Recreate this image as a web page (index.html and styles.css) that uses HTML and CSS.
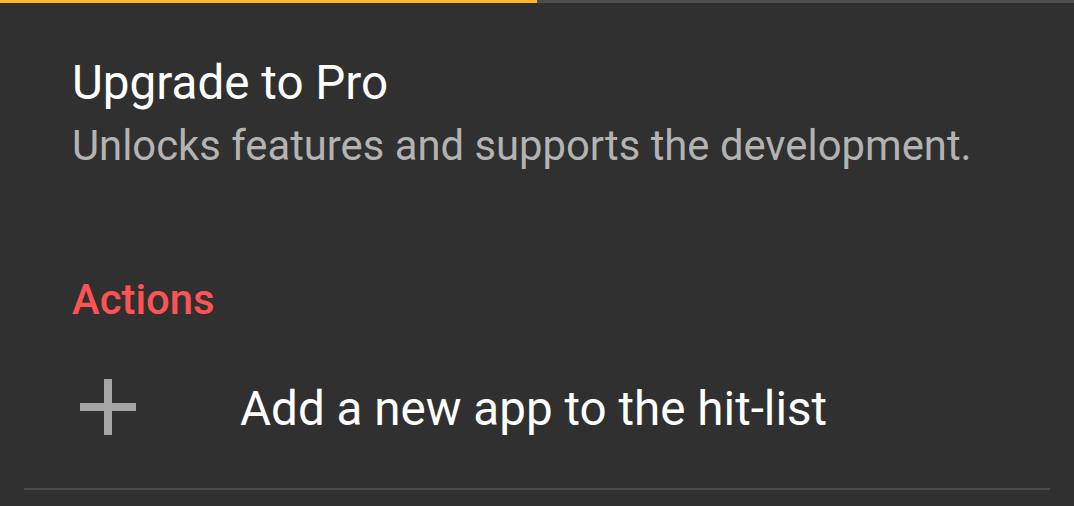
FILE: index.html
```html
<!DOCTYPE html>
<html>
<head>
<meta charset="utf-8">
<link rel="stylesheet" href="styles.css">
</head>
<body>
<div class="progress"><div class="progress-fill"></div></div>
<div class="pref">
  <div class="pref-title">Upgrade to Pro</div>
  <div class="pref-summary">Unlocks features and supports the development.</div>
</div>
<div class="category">Actions</div>
<div class="action">
  <svg class="action-icon" width="56" height="56" viewBox="0 0 56 56"><path d="M24 0h8v24h24v8H32v24h-8V32H0v-8h24z" fill="#a6a6a6"/></svg>
  <div class="action-text">Add a new app to the hit-list</div>
</div>
<div class="divider"></div>
</body>
</html>
```
FILE: styles.css
```css
html, body {
  margin: 0;
  padding: 0;
  background: #303030;
  font-family: Roboto, "Noto Sans", sans-serif;
  overflow: hidden;
}
.progress {
  height: 3px;
  background: #4d4d4d;
  display: flex;
}
.progress-fill {
  width: 537px;
  background: #ffb42a;
}
.pref {
  padding: 52px 0 0 72px;
}
.pref-title {
  color: #ffffff;
  font-size: 47.6px;
  line-height: 56px;
}
.pref-summary {
  margin-top: 7px;
  color: #b3b3b3;
  font-size: 41.8px;
  line-height: 56px;
}
.category {
  padding: 98px 0 0 72px;
  color: #ff5252;
  font-size: 41.8px;
  font-weight: 500;
  line-height: 56px;
}
.action {
  display: flex;
  align-items: flex-start;
  padding: 53px 0 0 80px;
}
.action-icon {
  margin-top: -2px;
  flex: none;
}
.action-text {
  color: #ffffff;
  font-size: 47.6px;
  line-height: 56px;
  margin-left: 104px;
}
.divider {
  margin: 51px 24px 0;
  height: 2px;
  background: #4a4a4a;
}
```
